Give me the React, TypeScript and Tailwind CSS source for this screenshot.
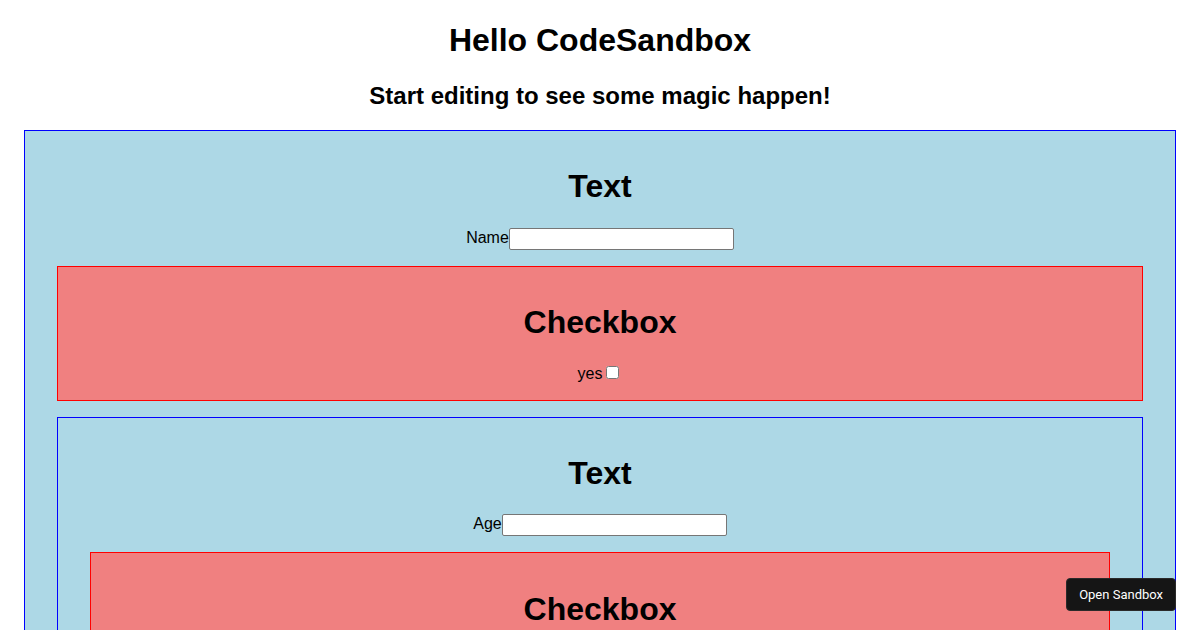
import React from "react";

// Recursive form boxes: each block draws a heading and a field, and may hold children.
function TextBlock({ label, children }: { label: string; children?: React.ReactNode }) {
  return (
    <div className="m-4 p-4 border border-[#0000ff] bg-[#add8e6]">
      <h1 className="text-[32px] font-bold leading-[37px] my-[21.44px]">Text</h1>
      <div className="leading-[22px]">
        <label>{label}</label>
        <input
          type="text"
          className="align-middle w-[225px] h-[22px] bg-white border border-[#767676] rounded-[2px] px-[2px] text-[13px]"
        />
      </div>
      {children}
    </div>
  );
}

function CheckboxBlock({ children }: { children?: React.ReactNode }) {
  return (
    <div className="m-4 p-4 border border-[#ff0000] bg-[#f08080]">
      <h1 className="text-[32px] font-bold leading-[37px] my-[21.44px]">Checkbox</h1>
      <div className="leading-[20px]">
        <label>yes</label>
        <input type="checkbox" className="ml-[4px] mr-[3px] my-[3px] w-[13px] h-[13px] bg-white" />
      </div>
      {children}
    </div>
  );
}

export default function App() {
  return (
    <div className="min-h-[630px] bg-white text-black text-center text-[16px] font-['Liberation_Sans',Arial,sans-serif] pt-px px-2">
      <h1 className="text-[32px] font-bold leading-[37px] mt-[21px] mb-[23px]">Hello CodeSandbox</h1>
      <h2 className="text-[24px] font-bold leading-[28px] mt-0 mb-[20px]">Start editing to see some magic happen!</h2>

      <TextBlock label="Name">
        <CheckboxBlock />
        <TextBlock label="Age">
          <CheckboxBlock />
        </TextBlock>
      </TextBlock>

      <button className="fixed right-[24px] bottom-[19px] h-[33px] px-3 rounded-[4px] bg-[#151515] text-white text-[13px] font-['Roboto',sans-serif] border border-[#2a2a2a]">
        Open Sandbox
      </button>
    </div>
  );
}
